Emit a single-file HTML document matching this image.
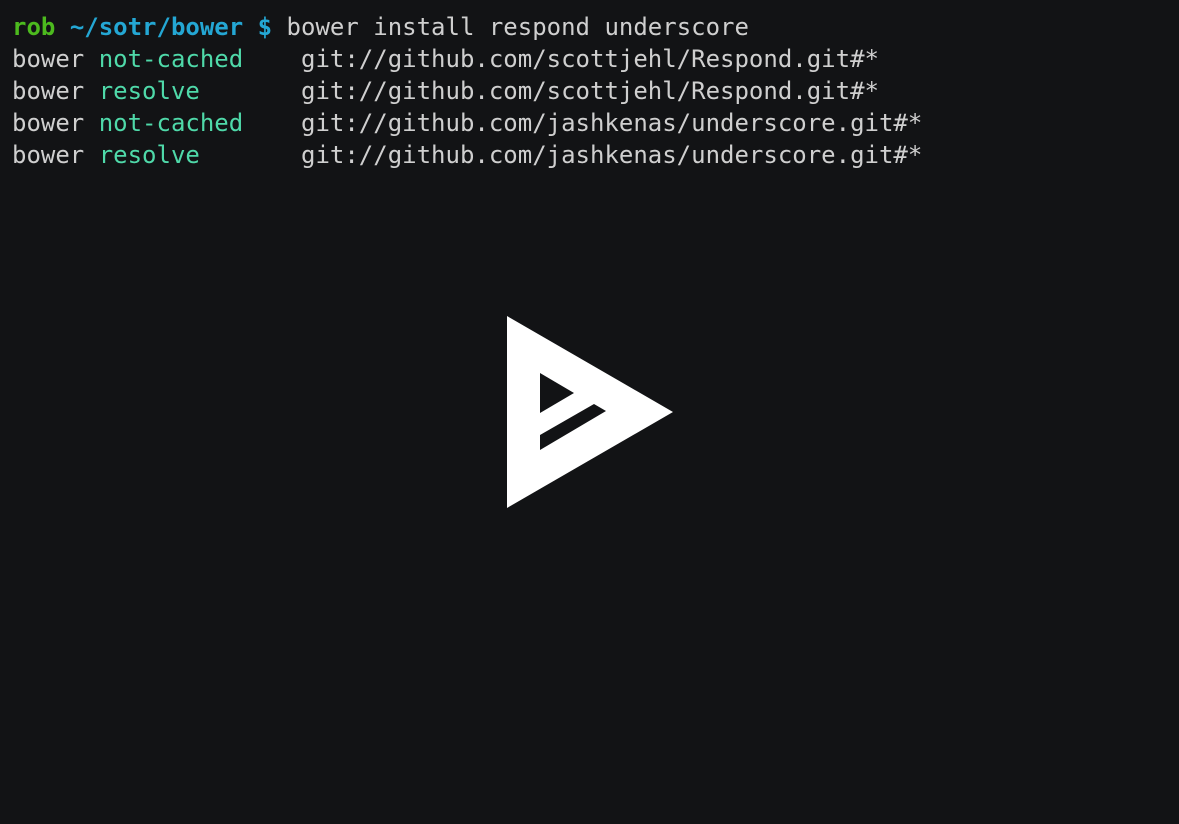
<!DOCTYPE html>
<html><head><style>
html,body{margin:0;padding:0;background:#121315;width:1179px;height:824px;overflow:hidden}
pre{margin:0;position:absolute;left:12px;top:11px;font-family:"DejaVu Sans Mono","Liberation Mono",monospace;font-size:24px;line-height:32px;color:#cfcfcf}
.g{color:#4cba1e;font-weight:bold}.b{color:#24a7d4;font-weight:bold}.t{color:#4fd9a9}
svg{position:absolute;left:0;top:0}
</style></head><body>
<pre><span class="g">rob</span> <span class="b">~/sotr/bower $</span> bower install respond underscore
bower <span class="t">not-cached</span>    git://github.com/scottjehl/Respond.git#*
bower <span class="t">resolve</span>       git://github.com/scottjehl/Respond.git#*
bower <span class="t">not-cached</span>    git://github.com/jashkenas/underscore.git#*
bower <span class="t">resolve</span>       git://github.com/jashkenas/underscore.git#*</pre>
<svg width="1179" height="824">
<polygon points="507,316 673,412 507,508" fill="#fff"/>
<polygon points="540,373 574,393 540,413" fill="#121315"/>
<polygon points="540,435 594,404 606,411 540,450" fill="#121315"/>
</svg>
</body></html>
